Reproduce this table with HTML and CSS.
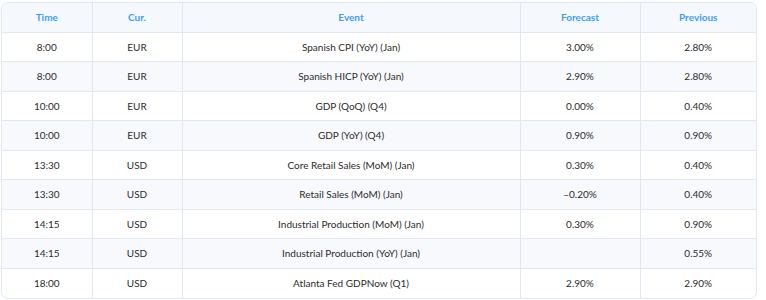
FILE: index.html
```
<!DOCTYPE html>
<html lang="en">
<head>
    <meta charset="UTF-8">
    <meta name="viewport" content="width=device-width, initial-scale=1.0">
    <title>Economic Calendar</title>
    <link rel="stylesheet" href="styles.css">
</head>
<body>
    <div class="calendar">
        <table>
            <thead>
                <tr>
                    <th class="col-time">Time</th>
                    <th class="col-cur">Cur.</th>
                    <th class="col-event">Event</th>
                    <th class="col-forecast">Forecast</th>
                    <th class="col-previous">Previous</th>
                </tr>
            </thead>
            <tbody>
                <tr><td>8:00</td><td>EUR</td><td>Spanish CPI (YoY) (Jan)</td><td>3.00%</td><td>2.80%</td></tr>
                <tr><td>8:00</td><td>EUR</td><td>Spanish HICP (YoY) (Jan)</td><td>2.90%</td><td>2.80%</td></tr>
                <tr><td>10:00</td><td>EUR</td><td>GDP (QoQ) (Q4)</td><td>0.00%</td><td>0.40%</td></tr>
                <tr><td>10:00</td><td>EUR</td><td>GDP (YoY) (Q4)</td><td>0.90%</td><td>0.90%</td></tr>
                <tr><td>13:30</td><td>USD</td><td>Core Retail Sales (MoM) (Jan)</td><td>0.30%</td><td>0.40%</td></tr>
                <tr><td>13:30</td><td>USD</td><td>Retail Sales (MoM) (Jan)</td><td>–0.20%</td><td>0.40%</td></tr>
                <tr><td>14:15</td><td>USD</td><td>Industrial Production (MoM) (Jan)</td><td>0.30%</td><td>0.90%</td></tr>
                <tr><td>14:15</td><td>USD</td><td>Industrial Production (YoY) (Jan)</td><td></td><td>0.55%</td></tr>
                <tr><td>18:00</td><td>USD</td><td>Atlanta Fed GDPNow (Q1)</td><td>2.90%</td><td>2.90%</td></tr>
            </tbody>
        </table>
    </div>
</body>
</html>
```

FILE: styles.css
```
* {
    margin: 0;
    padding: 0;
    box-sizing: border-box;
}

body {
    font-family: Lato, 'Open Sans', sans-serif;
    background: white;
    padding: 2px 0 0 1px;
}

.calendar {
    width: 756px;
    border: 1px solid #e1e8f1;
    border-radius: 7px;
    overflow: hidden;
}

table {
    width: 100%;
    border-collapse: collapse;
    table-layout: fixed;
}

th, td {
    height: 29.5px;
    text-align: center;
    font-size: 10px;
    border-right: 1px solid #e1e8f1;
    border-bottom: 1px solid #e1e8f1;
}

th {
    height: 29px;
}

th:last-child, td:last-child {
    border-right: none;
}

tbody tr:last-child td {
    border-bottom: none;
}

th {
    color: #3e9df6;
    font-weight: bold;
    background: #f5f8fc;
}

td {
    color: #2b2b2b;
}

tbody tr:nth-child(even) td {
    background: #f7f9fd;
}

.col-time { width: 90px; }
.col-cur { width: 90px; }
.col-event { width: 338px; }
.col-forecast { width: 120px; }
```
